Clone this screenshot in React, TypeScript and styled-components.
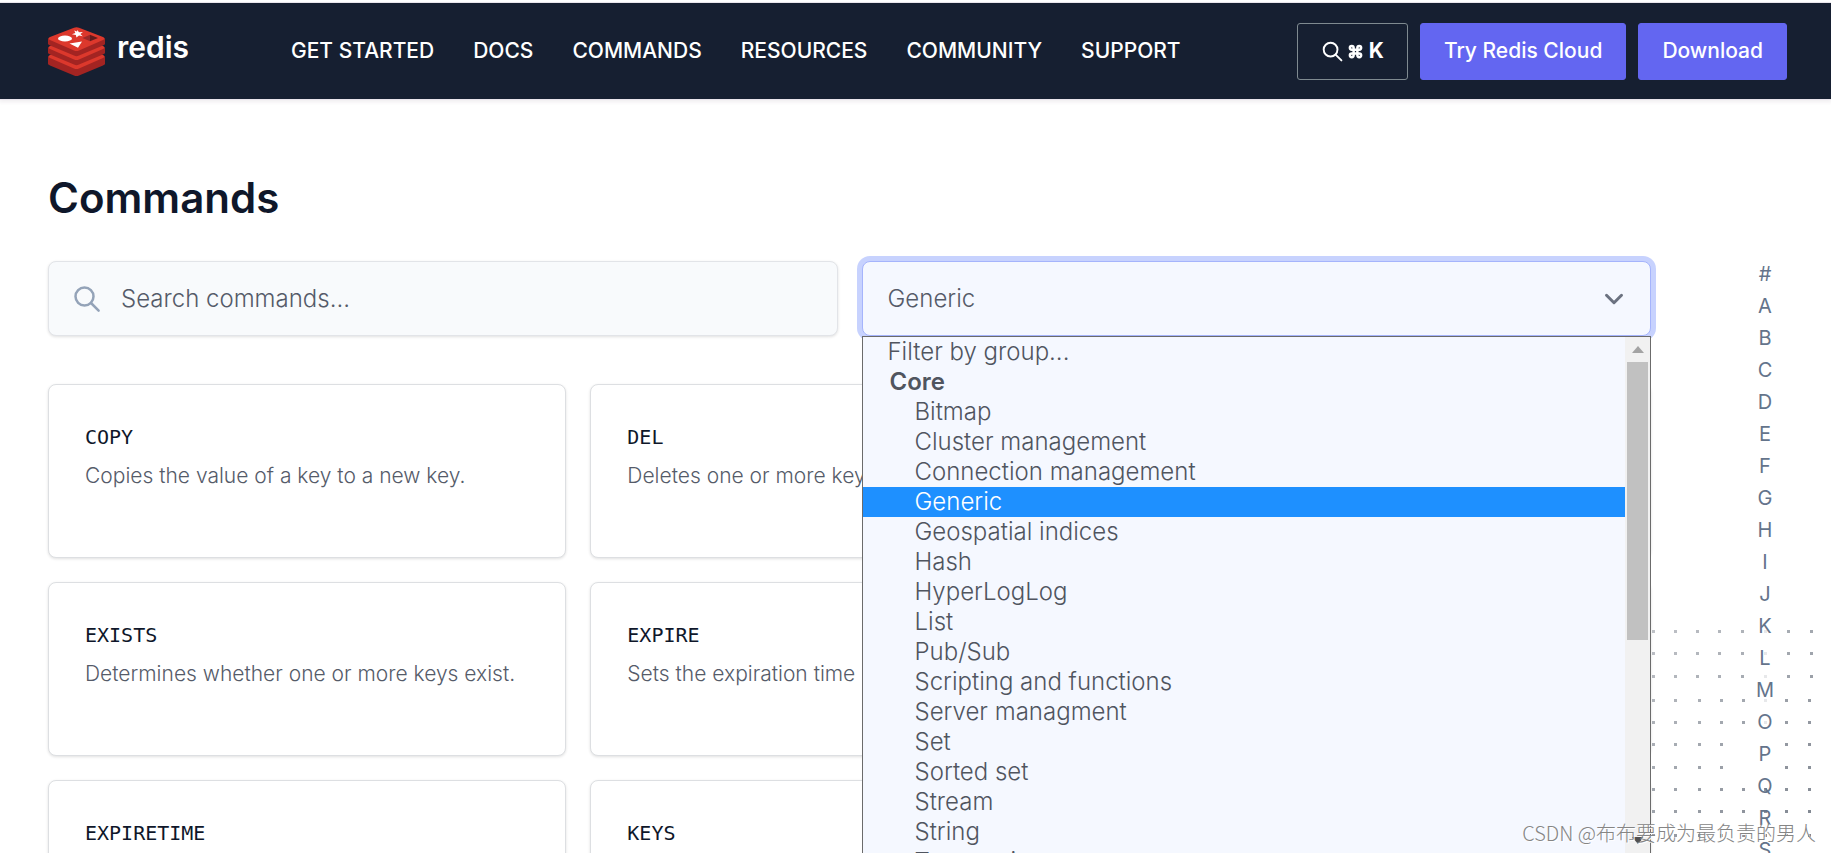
import React from 'react';
import styled, { createGlobalStyle } from 'styled-components';

const sans = `Inter, "Noto Sans CJK SC", sans-serif`;
const mono = `"DejaVu Sans Mono", "Liberation Mono", monospace`;

const GlobalStyle = createGlobalStyle`
  *, *::before, *::after { box-sizing: border-box; }
  body { margin: 0; background: #fff; font-family: ${sans}; color: #0f172a; }
  button, input, select { font-family: inherit; }
`;

const Page = styled.div`
  position: relative;
  height: 100vh;
  overflow: hidden;
  padding-top: 3px;
`;

const Header = styled.header`
  position: relative;
  display: flex;
  align-items: center;
  height: 96px;
  padding: 0 44px 0 48px;
  background: #161f31;
  box-shadow: 0 0 0 1px #e9e5ec, 0 2px 4px 1px rgba(60, 20, 70, 0.08);
`;

const Brand = styled.a`
  display: flex;
  align-items: center;
  gap: 12px;
  width: 243px;
  color: #fff;
  text-decoration: none;
`;

const BrandName = styled.span`
  font-size: 30px;
  line-height: 36px;
  font-weight: 600;
  padding-bottom: 8px;
`;

const Nav = styled.nav`
  display: flex;
  gap: 39px;
`;

const NavLink = styled.a`
  color: #fff;
  font-size: 21px;
  line-height: 30px;
  font-weight: 500;
  text-decoration: none;
`;

const Actions = styled.div`
  display: flex;
  gap: 12px;
  margin-left: auto;
`;

const HeaderButton = styled.button<{ $outline?: boolean }>`
  display: flex;
  align-items: center;
  gap: 4px;
  height: 57px;
  padding: 0 23px;
  border: 1px solid ${(p) => (p.$outline ? '#7f8a90' : '#6366f1')};
  border-radius: 3px;
  background: ${(p) => (p.$outline ? 'transparent' : '#6366f1')};
  color: #fff;
  font-size: 21px;
  line-height: 30px;
  font-weight: ${(p) => (p.$outline ? 700 : 500)};
`;

const Keys = styled.span`
  display: flex;
  align-items: center;
  gap: 6px;
`;

const Body = styled.div`
  position: relative;
  display: flex;
`;

const Main = styled.main`
  flex: 1;
  min-width: 0;
  padding: 69px 0 0 48px;
`;

const Title = styled.h1`
  margin: 0 0 33px;
  font-size: 42px;
  line-height: 60px;
  font-weight: 600;
`;

const Filters = styled.div`
  display: grid;
  grid-template-columns: 1fr 1fr;
  gap: 24px;
  margin-bottom: 48px;
`;

const SearchField = styled.label`
  display: flex;
  align-items: center;
  gap: 19px;
  height: 75px;
  padding: 0 23px;
  border: 1px solid #e2e4e8;
  border-radius: 8px;
  background: #f8fafc;
  box-shadow: 0 1px 3px rgba(0, 0, 0, 0.12);
`;

const SearchInput = styled.input`
  flex: 1;
  min-width: 0;
  padding: 0;
  border: 0;
  outline: 0;
  background: transparent;
  color: #555b69;
  font-size: 24px;
  line-height: 30px;
  font-weight: 300;
  &::placeholder { color: #555b69; opacity: 1; }
`;

const GroupField = styled.div`
  position: relative;
  z-index: 2;
  height: 75px;
`;

const GroupSelect = styled.select`
  appearance: none;
  display: block;
  width: 100%;
  height: 100%;
  padding: 0 60px 0 25px;
  border: 1px solid #a5b4fc;
  border-radius: 8px;
  outline: 0;
  background: #f5f8ff;
  box-shadow: 0 0 0 5px #c7d2fe;
  color: #555b69;
  font-size: 24px;
  line-height: 30px;
  font-weight: 300;
`;

const Chevron = styled.svg`
  position: absolute;
  top: 23px;
  right: 22px;
  pointer-events: none;
`;

const Menu = styled.div`
  position: absolute;
  top: 100%;
  left: 0;
  right: 0;
  display: flex;
  height: calc(100vh - 335px);
  border: 1px solid #6b6b6b;
  background: #f5f8ff;
`;

const OptionList = styled.ul`
  flex: 1;
  margin: 0;
  padding: 0;
  overflow: hidden;
  list-style: none;
`;

const Option = styled.li<{ $nested?: boolean; $active?: boolean }>`
  height: 30px;
  padding-left: ${(p) => (p.$nested ? 52 : 25)}px;
  background: ${(p) => (p.$active ? '#1e90ff' : 'transparent')};
  color: ${(p) => (p.$active ? '#fff' : '#50555f')};
  font-size: 24px;
  line-height: 30px;
  font-weight: 300;
`;

const OptionGroup = styled(Option)`
  padding-left: 27px;
  font-weight: 600;
`;

const Scrollbar = styled.div`
  display: flex;
  flex-direction: column;
  align-items: center;
  width: 25px;
  background: #f1f1f1;
`;

const ScrollArrow = styled.span<{ $down?: boolean }>`
  display: flex;
  flex: none;
  align-items: center;
  justify-content: center;
  width: 25px;
  height: 25px;
  margin-top: ${(p) => (p.$down ? 'auto' : '0')};
`;

const ScrollThumb = styled.span`
  width: 21px;
  height: 278px;
  background: #c1c1c1;
`;

const CardGrid = styled.div`
  display: grid;
  grid-template-columns: repeat(3, 1fr);
  gap: 24px;
`;

const Card = styled.a`
  display: block;
  height: 174px;
  padding: 37px 36px;
  border: 1px solid #dddfe2;
  border-radius: 8px;
  background: #fff;
  box-shadow: 0 1px 3px rgba(0, 0, 0, 0.12);
  color: inherit;
  text-decoration: none;
`;

const CardName = styled.h2`
  margin: 0 0 8px;
  font-family: ${mono};
  font-size: 20px;
  line-height: 30px;
  font-weight: 400;
`;

const CardText = styled.p`
  margin: 0;
  overflow: hidden;
  color: #555b69;
  font-size: 21px;
  line-height: 32px;
  font-weight: 300;
  white-space: nowrap;
`;

const LetterIndex = styled.nav`
  position: relative;
  display: flex;
  flex-direction: column;
  align-items: center;
  width: 180px;
  padding: 159px 0 0 48px;
`;

const Letter = styled.a`
  color: #64748b;
  font-size: 20px;
  line-height: 32px;
  font-weight: 400;
  text-decoration: none;
`;

const Dots = styled.svg`
  position: absolute;
  top: 530px;
  right: 0;
`;

const Watermark = styled.div`
  position: absolute;
  right: 15px;
  bottom: 5px;
  z-index: 3;
  color: #858585;
  font-family: "Noto Sans CJK SC", sans-serif;
  font-size: 20px;
  line-height: 30px;
  font-weight: 300;
  text-shadow: 1px 1px 0 #fff;
`;

function RedisLogo() {
  const layers = [
    { dy: 18, depth: 6 },
    { dy: 9, depth: 4 },
    { dy: 0, depth: 4 },
  ];
  return (
    <svg width="57" height="49" viewBox="0 0 57 49" aria-hidden="true">
      {layers.map(({ dy, depth }) => (
        <g key={dy}>
          <path
            d={`M0 ${11.5 + dy}v${depth + 1}c0 1 1 1.500 2 2l24 10c2 1 3 1 5 0l24-10c1-.5 2-1 2-2v-${depth + 1}z`}
            fill="#a32422"
          />
          <path
            d={`M2 ${10 + dy}L26 ${0.7 + dy}q2.500-1 5 0L55 ${10 + dy}q3 1.500 0 3L31 ${23.5 + dy}q-2.500 1-5 0L2 ${13 + dy}q-3-1.500 0-3z`}
            fill="#dc382c"
          />
        </g>
      ))}
      <path
        d="M29.500 3l1.400 2.200 4-.3-2.500 2.100 2.300 2.200-3.700-.6-2.600 2-.5-2.600-4-.8 3.400-1.300-1-2.500 2.700 1z"
        fill="#fff"
      />
      <ellipse cx="17" cy="11.500" rx="7" ry="3" fill="#fff" />
      <path d="M21.500 16.500l12.500-2-4 6.300z" fill="#fff" />
      <path d="M42 7.800l8 3.200-8 3.200z" fill="#621b1c" />
      <path d="M42 7.800v6.400L34.500 11z" fill="#9a2928" />
    </svg>
  );
}

function SearchGlyph({ size, color, weight }: { size: number; color: string; weight: number }) {
  return (
    <svg width={size} height={size} viewBox="0 0 24 24" fill="none" stroke={color} strokeWidth={weight} strokeLinecap="round" aria-hidden="true">
      <circle cx="10" cy="10" r="7.200" />
      <path d="M15.200 15.200L21.300 21.300" />
    </svg>
  );
}

const columnsUpper = [3, 25, 47, 69, 92, 115, 138, 161];
const columnsLower = [3, 25, 49, 71, 93, 115, 136, 159];
const rows = [2, 24, 47, 71, 93, 115, 138, 160, 182, 206];

function DotField() {
  return (
    <Dots width="180" height="220" aria-hidden="true">
      {rows.map((y, r) =>
        (r < 3 ? columnsUpper : columnsLower).map((x, c) => {
          if ((r === 5 || r === 6) && (c === 4 || c === 5)) return null;
          const faded = c === 5 && r < 5;
          const opacity = faded ? 0.12 : 0.32 + c * 0.02 + r * 0.02;
          return <rect key={`${r}-${c}`} x={x - 2} y={y - 1} width="3" height="3" fill="#374151" opacity={opacity} />;
        }),
      )}
    </Dots>
  );
}

const navItems = ['GET STARTED', 'DOCS', 'COMMANDS', 'RESOURCES', 'COMMUNITY', 'SUPPORT'];

const coreGroups = [
  'Bitmap',
  'Cluster management',
  'Connection management',
  'Generic',
  'Geospatial indices',
  'Hash',
  'HyperLogLog',
  'List',
  'Pub/Sub',
  'Scripting and functions',
  'Server managment',
  'Set',
  'Sorted set',
  'Stream',
  'String',
  'Transactions',
];

const commands = [
  ['COPY', 'Copies the value of a key to a new key.'],
  ['DEL', 'Deletes one or more keys.'],
  ['DUMP', 'Returns a serialized value of a key.'],
  ['EXISTS', 'Determines whether one or more keys exist.'],
  ['EXPIRE', 'Sets the expiration time in seconds.'],
  ['EXPIREAT', 'Sets the expiration time of a key.'],
  ['EXPIRETIME', 'Returns the expiration time of a key.'],
  ['KEYS', 'Returns all keys that match a pattern.'],
  ['MIGRATE', 'Transfers a key between instances.'],
];

const letters = '#ABCDEFGHIJKLMOPQRS'.split('');

export default function App() {
  const [group, setGroup] = React.useState('Generic');

  return (
    <Page>
      <GlobalStyle />
      <Header>
        <Brand href="#home">
          <RedisLogo />
          <BrandName>redis</BrandName>
        </Brand>
        <Nav>
          {navItems.map((item) => (
            <NavLink key={item} href="#nav">{item}</NavLink>
          ))}
        </Nav>
        <Actions>
          <HeaderButton $outline aria-label="Search">
            <SearchGlyph size={23} color="#fff" weight={2} />
            <Keys>
              <svg width="15" height="15" viewBox="0 0 24 24" fill="none" stroke="#fff" strokeWidth="4" aria-hidden="true">
                <path d="M15 6v12a3 3 0 1 0 3-3H6a3 3 0 1 0 3 3V6a3 3 0 1 0-3 3h12a3 3 0 1 0-3-3" />
              </svg>
              K
            </Keys>
          </HeaderButton>
          <HeaderButton>Try Redis Cloud</HeaderButton>
          <HeaderButton>Download</HeaderButton>
        </Actions>
      </Header>

      <Body>
        <DotField />
        <Main>
          <Title>Commands</Title>
          <Filters>
            <SearchField>
              <SearchGlyph size={30} color="#94a3b8" weight={2} />
              <SearchInput type="text" placeholder="Search commands..." aria-label="Search commands" />
            </SearchField>
            <GroupField>
              <GroupSelect aria-label="Filter by group" value={group} onChange={(e) => setGroup(e.target.value)}>
                {coreGroups.map((name) => (
                  <option key={name}>{name}</option>
                ))}
              </GroupSelect>
              <Chevron width="30" height="30" viewBox="0 0 20 20" fill="none" stroke="#6b7280" strokeWidth="2" strokeLinecap="round" strokeLinejoin="round" aria-hidden="true">
                <path d="M5 7.500l5 5 5-5" />
              </Chevron>
              <Menu>
                <OptionList role="listbox" aria-label="Command groups">
                  <Option role="option">Filter by group...</Option>
                  <OptionGroup role="presentation">Core</OptionGroup>
                  {coreGroups.map((name) => (
                    <Option
                      key={name}
                      role="option"
                      aria-selected={name === group}
                      $nested
                      $active={name === group}
                      onClick={() => setGroup(name)}
                    >
                      {name}
                    </Option>
                  ))}
                </OptionList>
                <Scrollbar aria-hidden="true">
                  <ScrollArrow>
                    <svg width="12" height="7" viewBox="0 0 12 7"><path d="M6 0l6 7H0z" fill="#a3a3a3" /></svg>
                  </ScrollArrow>
                  <ScrollThumb />
                  <ScrollArrow $down>
                    <svg width="12" height="7" viewBox="0 0 12 7"><path d="M0 0h12L6 7z" fill="#505050" /></svg>
                  </ScrollArrow>
                </Scrollbar>
              </Menu>
            </GroupField>
          </Filters>
          <CardGrid>
            {commands.map(([name, text]) => (
              <Card key={name} href="#command">
                <CardName>{name}</CardName>
                <CardText>{text}</CardText>
              </Card>
            ))}
          </CardGrid>
        </Main>
        <LetterIndex aria-label="Commands by letter">
          {letters.map((letter) => (
            <Letter key={letter} href="#letter">{letter}</Letter>
          ))}
        </LetterIndex>
      </Body>
      <Watermark>CSDN @布布要成为最负责的男人</Watermark>
    </Page>
  );
}
